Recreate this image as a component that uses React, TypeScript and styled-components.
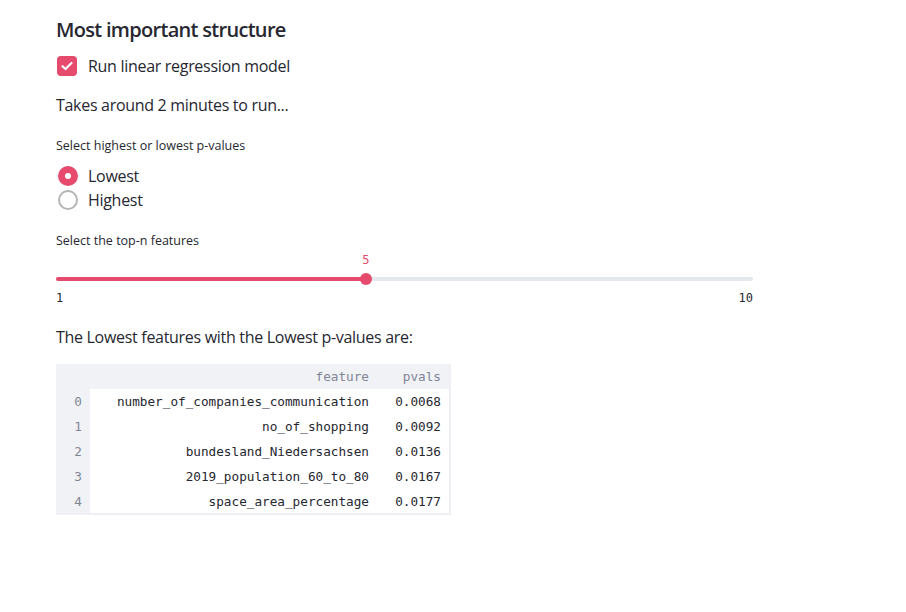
import React from "react";
import styled, { createGlobalStyle } from "styled-components";

const PRIMARY = "#e64a6d";
const TEXT = "#262730";
const MONO = `"DejaVu Sans Mono", "Liberation Mono", monospace`;

const Global = createGlobalStyle`
  html, body { margin: 0; padding: 0; background: #fff; }
  body { font-family: "Open Sans", "Noto Sans", sans-serif; color: ${TEXT}; }
  * { box-sizing: border-box; }
`;

const Page = styled.div`
  width: 906px;
  height: 612px;
  padding: 16px 0 0 56px;
  display: flex;
  flex-direction: column;
`;

const Title = styled.h2`
  margin: 0;
  font-size: 20px;
  font-weight: 600;
  line-height: 28px;
  letter-spacing: -0.7px;
`;

const OptionRow = styled.label<{ $top?: number }>`
  display: flex;
  align-items: center;
  gap: 11px;
  height: 24px;
  margin-top: ${(p) => p.$top ?? 0}px;
  font-size: 16px;
  line-height: 24px;
  letter-spacing: -0.3px;
`;

const CheckBox = styled.span`
  width: 20px;
  height: 20px;
  margin-left: 1px;
  border-radius: 4px;
  background: ${PRIMARY};
  display: flex;
  align-items: center;
  justify-content: center;
`;

const Radio = styled.span<{ $on?: boolean }>`
  width: 20px;
  height: 20px;
  margin-left: 2px;
  margin-right: -1px;
  border-radius: 50%;
  display: flex;
  align-items: center;
  justify-content: center;
  background: ${(p) => (p.$on ? PRIMARY : "#fff")};
  border: ${(p) => (p.$on ? "none" : "2px solid #b5b5b8")};
  &::after {
    content: "";
    display: ${(p) => (p.$on ? "block" : "none")};
    width: 6px;
    height: 6px;
    border-radius: 50%;
    background: #fff;
  }
`;

const Para = styled.p<{ $top: number }>`
  margin: ${(p) => p.$top}px 0 0;
  font-size: 16px;
  line-height: 24px;
  letter-spacing: -0.3px;
`;

const Label = styled.div<{ $top: number }>`
  margin-top: ${(p) => p.$top}px;
  font-size: 12.5px;
  line-height: 16px;
`;

const SliderBox = styled.div`
  width: 697px;
  margin-top: 2px;
  display: flex;
  flex-direction: column;
`;

const ValueRow = styled.div`
  position: relative;
  height: 22px;
`;

const ValueText = styled.span`
  position: absolute;
  top: 2px;
  transform: translateX(-50%);
  font-family: ${MONO};
  font-size: 12px;
  color: ${PRIMARY};
`;

const Track = styled.div`
  position: relative;
  height: 4px;
  border-radius: 2px;
  background: #e6e8ef;
  margin-top: 4px;
`;

const Fill = styled.div`
  height: 100%;
  border-radius: 2px;
  background: ${PRIMARY};
`;

const Thumb = styled.div`
  position: absolute;
  top: 50%;
  width: 12px;
  height: 12px;
  border-radius: 50%;
  background: ${PRIMARY};
  transform: translate(-50%, -50%);
`;

const TickRow = styled.div`
  display: flex;
  justify-content: space-between;
  margin-top: 9px;
  font-family: ${MONO};
  font-size: 12px;
  line-height: 16px;
`;

const Table = styled.table`
  margin-top: 15px;
  border-collapse: collapse;
  font-family: ${MONO};
  font-size: 12.7px;
  border-right: 2px solid #eef0f4;
  border-bottom: 2px solid #eef0f4;
  width: 395px;
`;

const HeadCell = styled.th<{ $w?: number }>`
  background: #f0f2f6;
  color: #808495;
  font-weight: 400;
  text-align: right;
  height: 25px;
  padding: 0 8px;
  width: ${(p) => (p.$w ? `${p.$w}px` : "auto")};
`;

const IndexCell = styled.td`
  background: #f0f2f6;
  color: #808495;
  text-align: right;
  height: 25px;
  padding: 0 8px;
`;

const Cell = styled.td`
  text-align: right;
  height: 25px;
  padding: 0 8px;
  color: ${TEXT};
`;

const rows: [string, string][] = [
  ["number_of_companies_communication", "0.0068"],
  ["no_of_shopping", "0.0092"],
  ["bundesland_Niedersachsen", "0.0136"],
  ["2019_population_60_to_80", "0.0167"],
  ["space_area_percentage", "0.0177"],
];

export default function App() {
  const pct = ((5 - 1) / 9) * 100;
  return (
    <>
      <Global />
      <Page>
        <Title>Most important structure</Title>
        <OptionRow $top={10}>
          <CheckBox>
            <svg width="12" height="10" viewBox="0 0 12 10" fill="none">
              <path d="M1.5 5.2 L4.5 8 L10.5 2" stroke="#fff" strokeWidth="2.2" strokeLinecap="round" strokeLinejoin="round" />
            </svg>
          </CheckBox>
          Run linear regression model
        </OptionRow>
        <Para $top={15}>Takes around 2 minutes to run...</Para>
        <Label $top={21}>Select highest or lowest p-values</Label>
        <OptionRow $top={10}>
          <Radio $on />
          Lowest
        </OptionRow>
        <OptionRow>
          <Radio />
          Highest
        </OptionRow>
        <Label $top={21}>Select the top-n features</Label>
        <SliderBox>
          <ValueRow>
            <ValueText style={{ left: `${pct}%` }}>5</ValueText>
          </ValueRow>
          <Track>
            <Fill style={{ width: `${pct}%` }} />
            <Thumb style={{ left: `${pct}%` }} />
          </Track>
          <TickRow>
            <span>1</span>
            <span>10</span>
          </TickRow>
        </SliderBox>
        <Para $top={19}>The Lowest features with the Lowest p-values are:</Para>
        <Table>
          <thead>
            <tr>
              <HeadCell $w={34} />
              <HeadCell>feature</HeadCell>
              <HeadCell $w={73}>pvals</HeadCell>
            </tr>
          </thead>
          <tbody>
            {rows.map(([f, v], i) => (
              <tr key={i}>
                <IndexCell>{i}</IndexCell>
                <Cell>{f}</Cell>
                <Cell>{v}</Cell>
              </tr>
            ))}
          </tbody>
        </Table>
      </Page>
    </>
  );
}
